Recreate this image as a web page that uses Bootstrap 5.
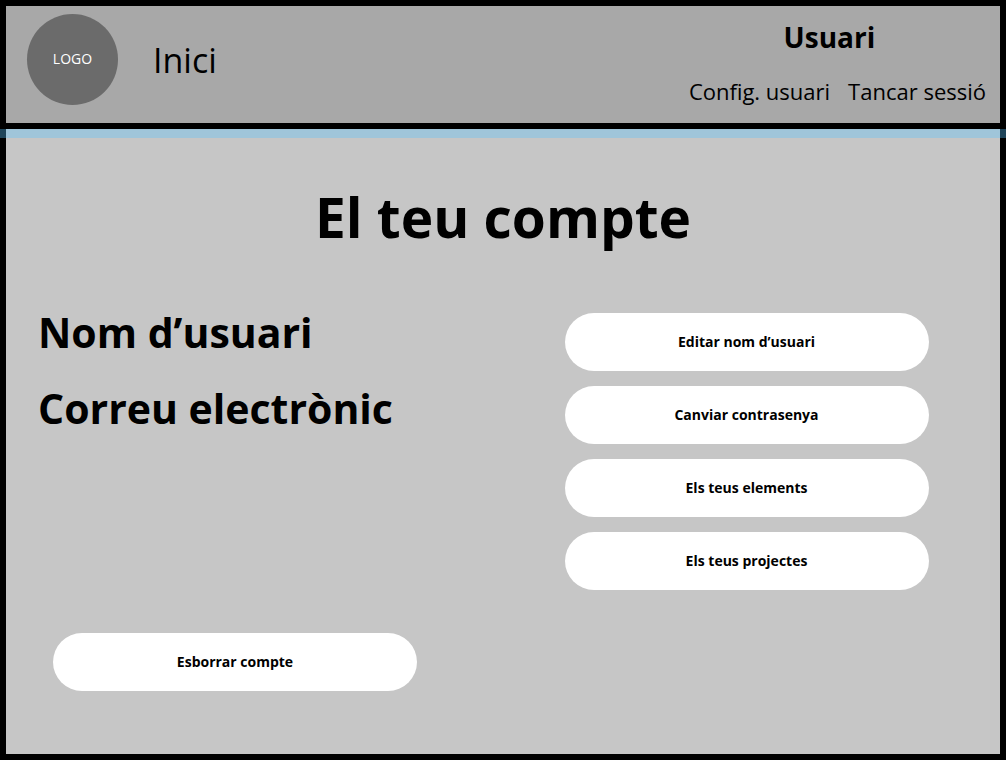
<!DOCTYPE html>
<html lang="ca">
<head>
<meta charset="utf-8">
<meta name="viewport" content="width=device-width, initial-scale=1">
<title>El teu compte</title>
<link href="https://cdn.jsdelivr.net/npm/bootstrap@5.3.0/dist/css/bootstrap.min.css" rel="stylesheet">
<style>
  body { font-family: "Open Sans", sans-serif; color: #000; background: #fff; }
  .frame { background: #000; padding: 6px; }
  .topbar { background: #a8a8a8; min-height: 117px; padding: 8px 14px 8px 21px; }
  .logo { width: 91px; height: 91px; background: #6b6b6b; color: #fff; font-size: 14px; padding-bottom: 2px; }
  .topbar a { color: #000; text-decoration: none; }
  .home-link { font-size: 34px; line-height: 46px; margin-left: 35px; }
  .user-name { font-size: 28px; line-height: 38px; margin-top: 4px; padding-right: 16px; }
  .user-links { font-size: 22px; line-height: 30px; gap: 18px; margin-top: 20px; }
  /* translucent line across the frame and the top of the panel */
  .stripe { height: 9px; background: rgba(88, 195, 255, .354); margin: 6px -6px -9px; z-index: 1; }
  .panel { background: #c6c6c6; padding: 50px 0 63px; }
  .page-title { font-size: 55px; line-height: 76px; }
  .account { margin-top: 39px; }
  .fields { padding-left: 32px; }
  .field-title { font-size: 41px; line-height: 76px; }
  .actions { gap: 15px; padding: 19px 10px 0 0; }
  .pill { background: #fff; color: #000; border: 0; border-radius: 29px; height: 58px; padding: 0 16px 2px; width: 100%; max-width: 364px; font-size: 14px; font-weight: 700; }
  .danger-zone { margin-top: 43px; padding-left: 47px; }
</style>
</head>
<body>
<div class="frame d-flex flex-column">
  <header class="topbar d-flex flex-wrap justify-content-between align-items-start">
    <div class="d-flex align-items-center">
      <div class="logo rounded-circle d-flex align-items-center justify-content-center">LOGO</div>
      <a class="home-link" href="#">Inici</a>
    </div>
    <div>
      <div class="user-name fw-bold text-center">Usuari</div>
      <nav class="user-links d-flex" aria-label="Usuari">
        <a href="#">Config. usuari</a>
        <a href="#">Tancar sessió</a>
      </nav>
    </div>
  </header>
  <div class="stripe"></div>
  <main class="panel">
    <h1 class="page-title fw-bold text-center m-0">El teu compte</h1>
    <div class="account row g-0">
      <div class="col-md-6 fields">
        <h2 class="field-title fw-bold m-0">Nom d’usuari</h2>
        <h2 class="field-title fw-bold m-0">Correu electrònic</h2>
      </div>
      <div class="col-md-6 actions d-flex flex-column align-items-center">
        <button class="pill" type="button">Editar nom d’usuari</button>
        <button class="pill" type="button">Canviar contrasenya</button>
        <button class="pill" type="button">Els teus elements</button>
        <button class="pill" type="button">Els teus projectes</button>
      </div>
    </div>
    <div class="danger-zone">
      <button class="pill" type="button">Esborrar compte</button>
    </div>
  </main>
</div>
<script src="https://cdn.jsdelivr.net/npm/bootstrap@5.3.0/dist/js/bootstrap.bundle.min.js"></script>
</body>
</html>
